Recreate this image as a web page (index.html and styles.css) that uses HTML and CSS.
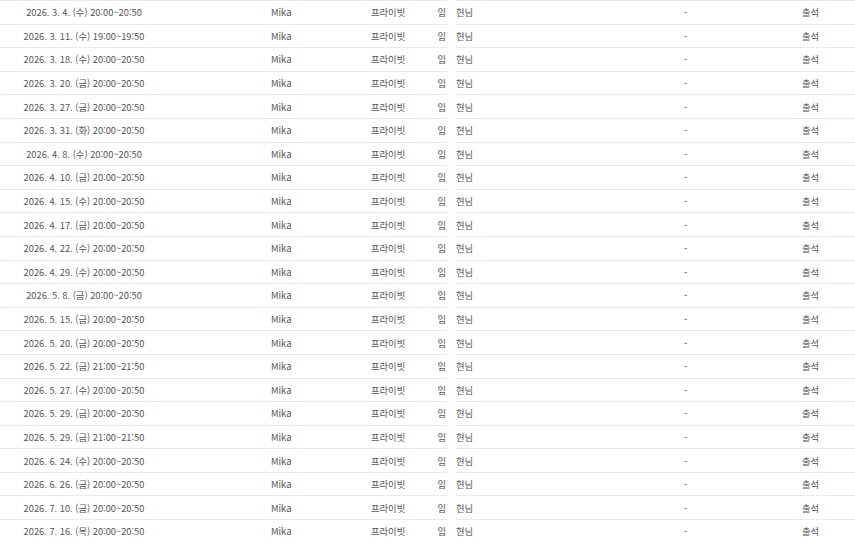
FILE: index.html
```html
<!doctype html>
<html lang="ko">
<head>
    <meta charset="UTF-8">
    <title>수업 기록</title>
    <link rel="stylesheet" href="styles.css">
</head>
<body>
    <div class="sheet">
        <div class="part left" id="left"></div>
        <div class="part right" id="right"></div>
    </div>
    <script>
        const rows = [
            "2026. 3. 4. (수) 20:00~20:50",
            "2026. 3. 11. (수) 19:00~19:50",
            "2026. 3. 18. (수) 20:00~20:50",
            "2026. 3. 20. (금) 20:00~20:50",
            "2026. 3. 27. (금) 20:00~20:50",
            "2026. 3. 31. (화) 20:00~20:50",
            "2026. 4. 8. (수) 20:00~20:50",
            "2026. 4. 10. (금) 20:00~20:50",
            "2026. 4. 15. (수) 20:00~20:50",
            "2026. 4. 17. (금) 20:00~20:50",
            "2026. 4. 22. (수) 20:00~20:50",
            "2026. 4. 29. (수) 20:00~20:50",
            "2026. 5. 8. (금) 20:00~20:50",
            "2026. 5. 15. (금) 20:00~20:50",
            "2026. 5. 20. (금) 20:00~20:50",
            "2026. 5. 22. (금) 21:00~21:50",
            "2026. 5. 27. (수) 20:00~20:50",
            "2026. 5. 29. (금) 20:00~20:50",
            "2026. 5. 29. (금) 21:00~21:50",
            "2026. 6. 24. (수) 20:00~20:50",
            "2026. 6. 26. (금) 20:00~20:50",
            "2026. 7. 10. (금) 20:00~20:50",
            "2026. 7. 16. (목) 20:00~20:50"
        ];
        const left = document.getElementById("left");
        const right = document.getElementById("right");
        for (let i = 0; i < rows.length; i++) {
            const l = document.createElement("div");
            l.className = "row";
            l.innerHTML = `<span class="date">${rows[i]}</span><span class="name">Mika</span><span class="kind">프라이빗</span><span class="im">임</span>`;
            left.appendChild(l);
            const r = document.createElement("div");
            r.className = "row";
            r.innerHTML = `<span class="teacher">현님</span><span class="memo">-</span><span class="status">출석</span>`;
            right.appendChild(r);
        }
    </script>
</body>
</html>
```

FILE: styles.css
```css
* {
    margin: 0;
    padding: 0;
    box-sizing: border-box;
}

body {
    background: #fff;
    font-family: "Noto Sans CJK KR", "Noto Sans", sans-serif;
    font-size: 9.3px;
    color: #555;
}

.sheet {
    display: flex;
    gap: 8px;
    width: 855px;
}

.left {
    width: 447px;
}

.right {
    flex: 1;
}

.row {
    display: grid;
    height: 23.6px;
    align-items: center;
    border-top: 1px solid #e8eaf0;
    white-space: nowrap;
}

.left .row {
    grid-template-columns: 168px 203px 59px 1fr;
}

.right .row {
    grid-template-columns: 229px 118px 1fr;
}

.date {
    text-align: center;
}

.name {
    padding-left: 103px;
}

.im {
    text-align: right;
    padding-right: 1px;
}

.teacher {
    padding-left: 1px;
}
```
